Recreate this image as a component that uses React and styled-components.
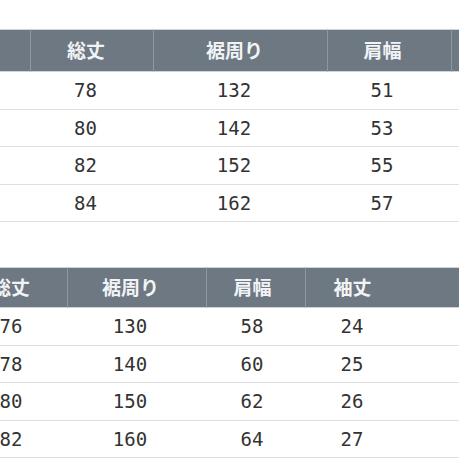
import * as React from "react"
import styled, { createGlobalStyle } from "styled-components"

const GlobalStyle = createGlobalStyle`
  html, body {
    margin: 0;
    padding: 0;
    background: #fff;
  }
`

const Page = styled.div`
  width: 459px;
  height: 459px;
  overflow: hidden;
  padding-top: 29px;
  box-sizing: border-box;
  display: flex;
  flex-direction: column;
  gap: 45px;
  background: #fff;
`

const Grid = styled.div`
  display: grid;
  grid-template-columns: ${(p) => p.$cols};
  margin-left: ${(p) => p.$shift || 0}px;
  width: max-content;
`

const HeadCell = styled.div`
  box-sizing: border-box;
  height: ${(p) => p.$h}px;
  background: #6d7882;
  border-top: 1px solid #cfd4d8;
  border-bottom: 1px solid #cfd4d8;
  border-left: ${(p) => (p.$divider ? "1px solid #8d979f" : "none")};
  color: #f1f3f5;
  font-family: "Noto Sans CJK JP", "Noto Sans", sans-serif;
  font-weight: 700;
  font-size: 19px;
  display: flex;
  align-items: center;
  justify-content: center;
  padding-right: ${(p) => p.$pr}px;
  padding-bottom: 2px;
  white-space: nowrap;
`

const BodyCell = styled.div`
  box-sizing: border-box;
  height: 37.5px;
  border-bottom: 1.5px solid #dedfe0;
  color: #333;
  font-family: "DejaVu Sans Mono", "Liberation Mono", monospace;
  font-size: 19px;
  display: flex;
  align-items: center;
  justify-content: center;
  padding-right: ${(p) => p.$pr}px;
  white-space: nowrap;
`

const SizeTable = ({ cols, shift, headHeight, pads, header, rows }) => (
  <Grid $cols={cols.map((c) => c + "px").join(" ")} $shift={shift}>
    {header.map((h, i) => (
      <HeadCell key={"h" + i} $h={headHeight} $pr={pads[i]} $divider={i > 0}>
        {h}
      </HeadCell>
    ))}
    {rows.map((r, ri) =>
      r.map((v, ci) => (
        <BodyCell key={ri + "-" + ci} $pr={pads[ci]}>
          {v}
        </BodyCell>
      ))
    )}
  </Grid>
)

export default function App() {
  return (
    <>
      <GlobalStyle />
      <Page>
        <SizeTable
          cols={[30, 123, 174, 124, 60]}
          headHeight={43}
          pads={[0, 12, 12, 14, 0]}
          header={["", "総丈", "裾周り", "肩幅", ""]}
          rows={[
            ["", "78", "132", "51", ""],
            ["", "80", "142", "53", ""],
            ["", "82", "152", "55", ""],
            ["", "84", "162", "57", ""],
          ]}
        />
        <SizeTable
          cols={[100, 139, 99, 187]}
          shift={-33}
          headHeight={41}
          pads={[12, 13, 7, 93]}
          header={["総丈", "裾周り", "肩幅", "袖丈"]}
          rows={[
            ["76", "130", "58", "24"],
            ["78", "140", "60", "25"],
            ["80", "150", "62", "26"],
            ["82", "160", "64", "27"],
          ]}
        />
      </Page>
    </>
  )
}
